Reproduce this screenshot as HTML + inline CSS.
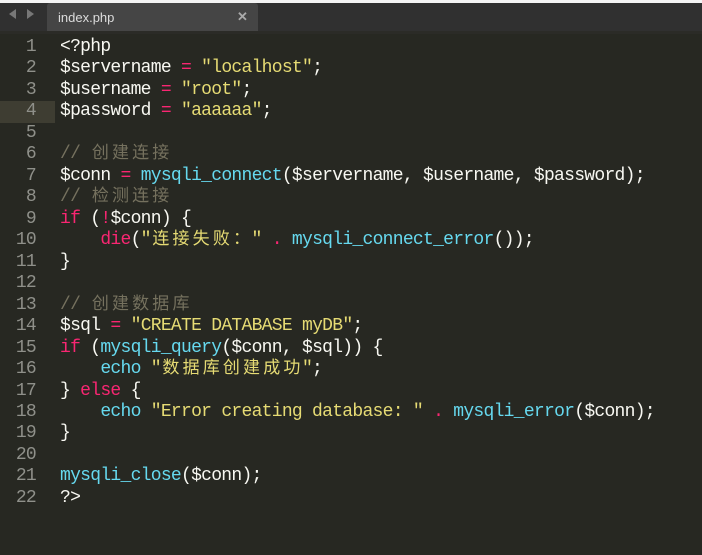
<!DOCTYPE html>
<html><head><meta charset="utf-8"><style>
body{margin:0;width:702px;height:555px;background:#272822;overflow:hidden;position:relative}
.top{position:absolute;left:0;top:0;width:702px;height:3px;background:#f4f4f4}
.bar{position:absolute;left:0;top:3px;width:702px;height:28px;background:#303030}
.tab{position:absolute;left:47px;top:3px;width:211px;height:28px;background:#454545;border-radius:3px 3px 0 0;font:13px "Liberation Sans",sans-serif;color:#dcdcdc}
.tab .n{position:absolute;left:11px;top:7px}
.tab .x{position:absolute;left:190px;top:6px;font-weight:bold;color:#aaa;font-size:13px}
.arr{position:absolute;top:9px;width:0;height:0;border-top:5px solid transparent;border-bottom:5px solid transparent}
.sep{position:absolute;left:0;top:31px;width:702px;height:3px;background:#2b2b27}
.code{position:absolute;left:0;top:37px;font:18px/21.48px "Liberation Mono","Noto Sans CJK SC",monospace;letter-spacing:-0.72px;color:#f8f8f2}
.l{height:21.48px;position:relative;white-space:pre}
.g{display:inline-block;width:36px;text-align:right;color:#8f908a;margin-right:24px}
.hl{position:absolute;left:0;top:0;width:55px;height:21.48px;background:#3e3d32}
.c{display:inline-block;width:20.16px;text-align:center;letter-spacing:0;font-size:17px}
.p{color:#f92672}.s{color:#e6db74}.f{color:#66d9ef}.m{color:#75715e}
</style></head><body>
<div class="top"></div><div class="bar"></div>
<div class="arr" style="left:9px;border-right:7px solid #777"></div>
<div class="arr" style="left:27px;border-left:7px solid #777"></div>
<div class="tab"><span class="n">index.php</span><span class="x">✕</span></div>
<div class="sep"></div>
<div class="code"><div class="l"><span class="g">1</span>&lt;?php</div><div class="l"><span class="g">2</span>$servername <span class="p">=</span> <span class="s">"localhost"</span>;</div><div class="l"><span class="g">3</span>$username <span class="p">=</span> <span class="s">"root"</span>;</div><div class="l"><div class="hl"></div><span class="g" style="position:relative">4</span>$password <span class="p">=</span> <span class="s">"aaaaaa"</span>;</div><div class="l"><span class="g">5</span></div><div class="l"><span class="g">6</span><span class="m">// <span class="c">创</span><span class="c">建</span><span class="c">连</span><span class="c">接</span></span></div><div class="l"><span class="g">7</span>$conn <span class="p">=</span> <span class="f">mysqli_connect</span>($servername, $username, $password);</div><div class="l"><span class="g">8</span><span class="m">// <span class="c">检</span><span class="c">测</span><span class="c">连</span><span class="c">接</span></span></div><div class="l"><span class="g">9</span><span class="p">if</span> (<span class="p">!</span>$conn) {</div><div class="l"><span class="g">10</span>    <span class="p">die</span>(<span class="s">"<span class="c">连</span><span class="c">接</span><span class="c">失</span><span class="c">败</span><span class="c">：</span>"</span> <span class="p">.</span> <span class="f">mysqli_connect_error</span>());</div><div class="l"><span class="g">11</span>}</div><div class="l"><span class="g">12</span></div><div class="l"><span class="g">13</span><span class="m">// <span class="c">创</span><span class="c">建</span><span class="c">数</span><span class="c">据</span><span class="c">库</span></span></div><div class="l"><span class="g">14</span>$sql <span class="p">=</span> <span class="s">"CREATE DATABASE myDB"</span>;</div><div class="l"><span class="g">15</span><span class="p">if</span> (<span class="f">mysqli_query</span>($conn, $sql)) {</div><div class="l"><span class="g">16</span>    <span class="f">echo</span> <span class="s">"<span class="c">数</span><span class="c">据</span><span class="c">库</span><span class="c">创</span><span class="c">建</span><span class="c">成</span><span class="c">功</span>"</span>;</div><div class="l"><span class="g">17</span>} <span class="p">else</span> {</div><div class="l"><span class="g">18</span>    <span class="f">echo</span> <span class="s">"Error creating database: "</span> <span class="p">.</span> <span class="f">mysqli_error</span>($conn);</div><div class="l"><span class="g">19</span>}</div><div class="l"><span class="g">20</span></div><div class="l"><span class="g">21</span><span class="f">mysqli_close</span>($conn);</div><div class="l"><span class="g">22</span>?&gt;</div></div>
</body></html>
